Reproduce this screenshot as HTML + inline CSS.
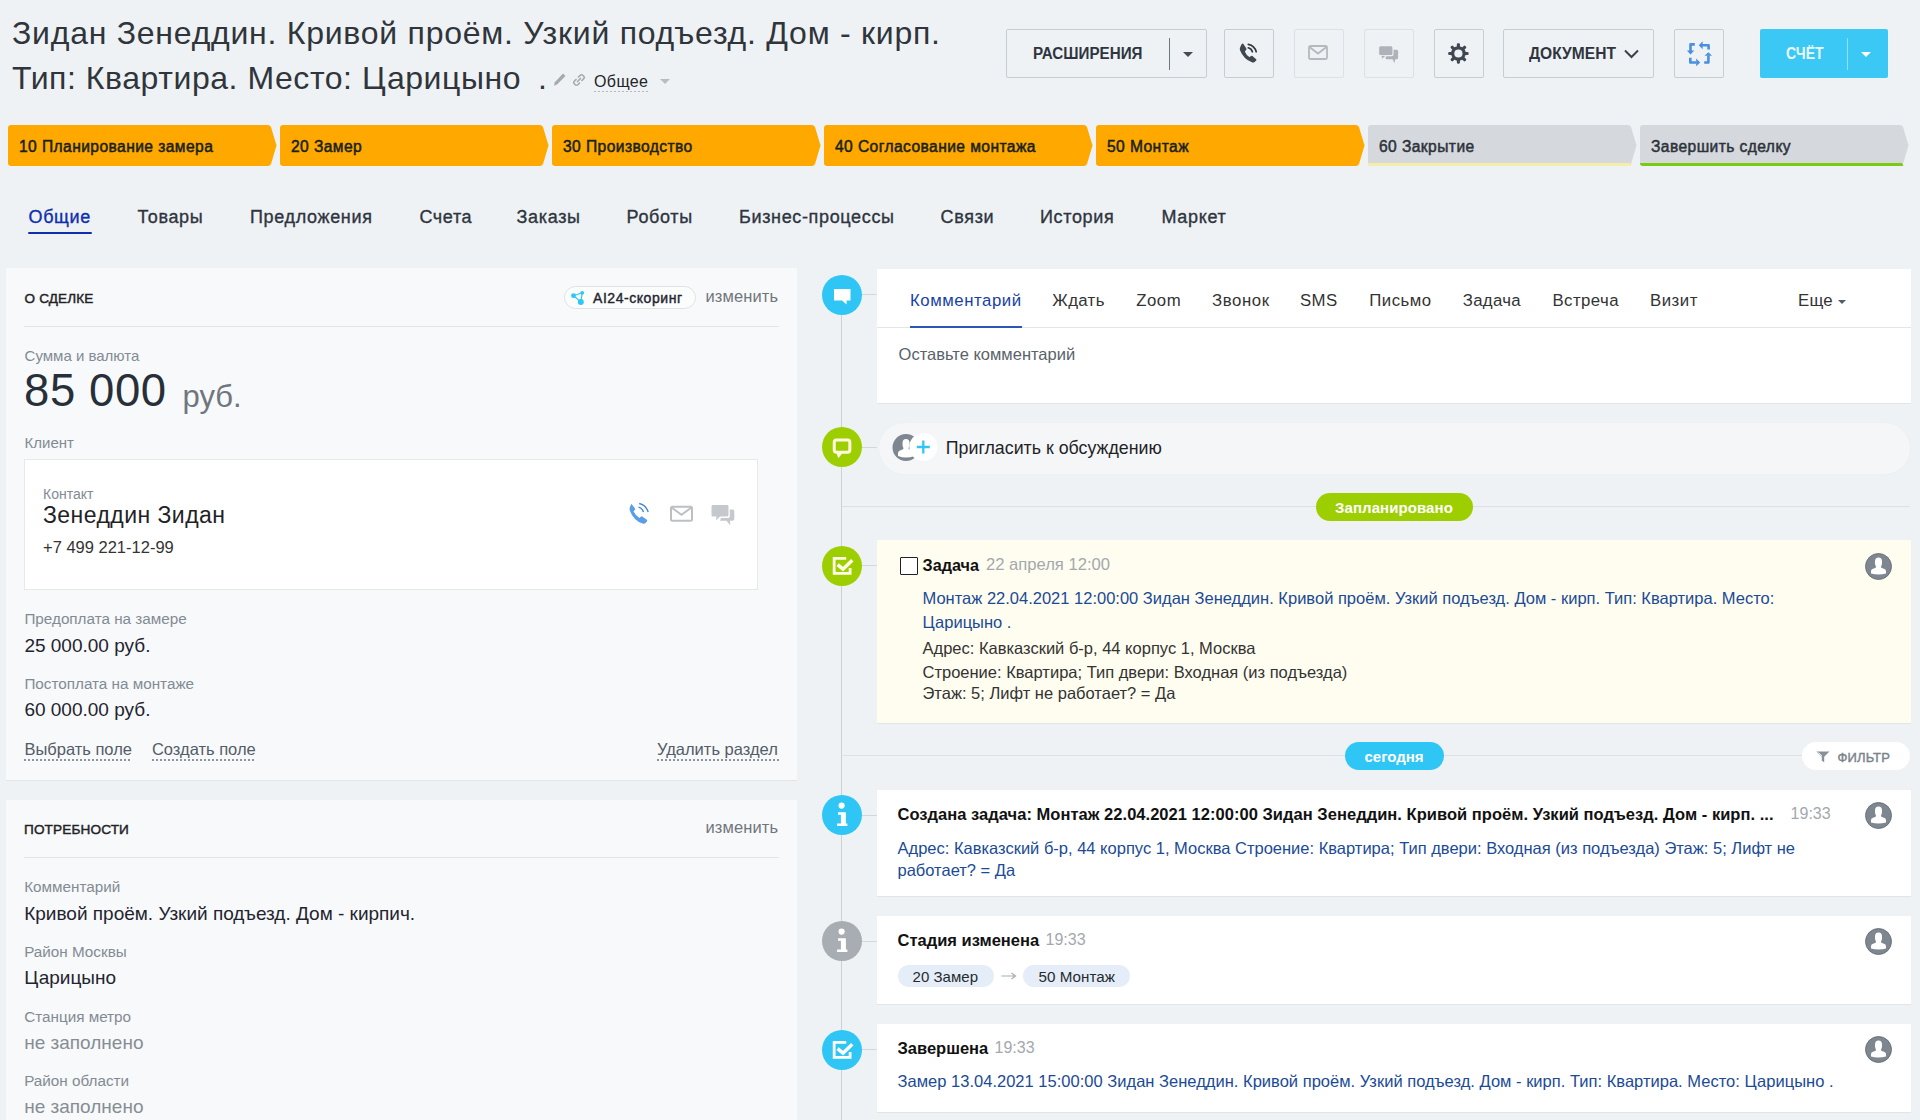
<!DOCTYPE html>
<html><head><meta charset="utf-8">
<style>
*{box-sizing:border-box;margin:0;padding:0}
html,body{width:1920px;height:1120px;overflow:hidden;background:#eef2f4;font-family:"Liberation Sans",sans-serif;color:#333}
.a{position:absolute}
.t{position:absolute;white-space:nowrap;line-height:1}
.btn{position:absolute;border:1px solid #c6cdd3;border-radius:2px;height:49px;top:29px}
.stg{position:absolute;top:125px;height:41px}
.stg svg{position:absolute;left:0;top:0}
.panel{position:absolute;background:#f8f9fa;box-shadow:0 1px 0 #e2e6e9}
.card{position:absolute;background:#fff;box-shadow:0 1px 0 #e1e5e8}
.ic{position:absolute;width:40px;height:40px;border-radius:50%;left:821px}
.lbl{color:#828b95}
.lnk{color:#2067b0}
.av{position:absolute;width:27px;height:27px;border-radius:50%;background:#878d94;overflow:hidden}
</style></head><body>

<!-- ===== HEADER ===== -->
<div class="t" style="left:12px;top:17px;font-size:32px;letter-spacing:.75px;color:#30353b">Зидан Зенеддин. Кривой проём. Узкий подъезд. Дом - кирп.</div>
<div class="t" style="left:12px;top:62px;font-size:32px;letter-spacing:.55px;color:#30353b">Тип: Квартира. Место: Царицыно</div>
<div class="t" style="left:538px;top:62px;font-size:32px;color:#30353b">.</div>


<!-- title icons -->
<svg class="a" style="left:553px;top:73px" width="13" height="14" viewBox="0 0 13 14"><path d="M10,0.5 L12.5,3 L4,11.5 L1,12.8 L1.8,9.2 Z" fill="#a5aab0"/></svg>
<svg class="a" style="left:572px;top:73px" width="14" height="14" viewBox="0 0 14 14"><g fill="none" stroke="#a5aab0" stroke-width="1.6"><path d="M6,4.5 L8,2.5 Q9.5,1 11,2.5 L11.5,3 Q13,4.5 11.5,6 L9.5,8"/><path d="M8,9.5 L6,11.5 Q4.5,13 3,11.5 L2.5,11 Q1,9.5 2.5,8 L4.5,6"/><path d="M5,9 L9,5"/></g></svg>
<div class="t" style="left:594px;top:74.3px;font-size:16px;letter-spacing:.4px;color:#1f2327">Общее</div>
<div class="a" style="left:594px;top:90.5px;width:56px;height:1.5px;background:repeating-linear-gradient(90deg,#b4b9be 0 2px,transparent 2px 4px)"></div>
<svg class="a" style="left:660px;top:79px" width="10" height="5" viewBox="0 0 10 5"><path d="M0,0 H10 L5,5Z" fill="#b9bdc2"/></svg>

<!-- buttons -->
<div class="btn" style="left:1006px;width:201px"></div>
<div class="t" style="left:1033px;top:45.8px;font-size:16.75px;font-weight:700;transform:scaleX(.906);transform-origin:0 0;color:#2f3540">РАСШИРЕНИЯ</div>
<div class="a" style="left:1168.5px;top:38px;width:1px;height:32px;background:#6f767e"></div>
<svg class="a" style="left:1183px;top:52px" width="10" height="5" viewBox="0 0 10 5"><path d="M0,0 H10 L5,5Z" fill="#454c55"/></svg>

<div class="btn" style="left:1224px;width:50px"></div>
<svg class="a" style="left:1238px;top:42px" width="20" height="22" viewBox="0 0 20 22"><path d="M5.2,1.8 L8.4,6.6 Q8.8,7.4 8.1,8.1 L6.8,9.4 Q7.9,12.6 11.6,15.3 L12.9,14.1 Q13.6,13.5 14.4,14 L18.2,17.2 Q18.8,17.8 18.2,18.5 L16.6,20 Q15.6,20.9 13.9,20.3 Q5.5,17 2,8.2 Q1.4,6.3 2.3,4.9 L3.7,2 Q4.3,1.2 5.2,1.8Z" fill="#3f4750"/><path d="M10.3,2.3 Q16.5,3.5 18.2,9.8" fill="none" stroke="#2f363e" stroke-width="1.7" stroke-linecap="round"/><path d="M10.3,5.8 Q13.5,6.6 14.4,9.8" fill="none" stroke="#2f363e" stroke-width="1.7" stroke-linecap="round"/></svg>

<div class="btn" style="left:1294px;width:50px;border-color:#dde1e5"></div>
<svg class="a" style="left:1308px;top:45px" width="20" height="15" viewBox="0 0 20 15"><rect x="1" y="1" width="18" height="13" rx="1.5" fill="none" stroke="#b5b9be" stroke-width="1.8"/><path d="M1.5,2 L10,8.5 L18.5,2" fill="none" stroke="#b5b9be" stroke-width="1.8"/></svg>

<div class="btn" style="left:1364px;width:50px;border-color:#dde1e5"></div>
<svg class="a" style="left:1377px;top:44px" width="24" height="22" viewBox="0 0 24 22"><rect x="8.5" y="5.8" width="12.6" height="9.4" rx="1.5" fill="#aeb3b9"/><path d="M15.3,14.8 L17.6,19.2 L18.2,14.8Z" fill="#aeb3b9"/><rect x="1.8" y="1.9" width="14.1" height="9.8" rx="1.6" fill="#aeb3b9" stroke="#eef2f4" stroke-width="1.3"/><path d="M4.0,11.3 L4.6,16 L9.6,11.3Z" fill="#aeb3b9" stroke="#eef2f4" stroke-width="1.1" stroke-linejoin="round"/><rect x="2.45" y="2.55" width="12.8" height="8.5" rx="1.2" fill="#aeb3b9"/></svg>

<div class="btn" style="left:1434px;width:50px"></div>
<svg class="a" style="left:1447px;top:42px" width="23" height="23" viewBox="0 0 23 23"><g fill="#3f4750" transform="translate(11.4 11.5)"><rect x="-1.55" y="-10.2" width="3.1" height="4.5" rx="1.1" transform="rotate(0)"/><rect x="-1.55" y="-10.2" width="3.1" height="4.5" rx="1.1" transform="rotate(45)"/><rect x="-1.55" y="-10.2" width="3.1" height="4.5" rx="1.1" transform="rotate(90)"/><rect x="-1.55" y="-10.2" width="3.1" height="4.5" rx="1.1" transform="rotate(135)"/><rect x="-1.55" y="-10.2" width="3.1" height="4.5" rx="1.1" transform="rotate(180)"/><rect x="-1.55" y="-10.2" width="3.1" height="4.5" rx="1.1" transform="rotate(225)"/><rect x="-1.55" y="-10.2" width="3.1" height="4.5" rx="1.1" transform="rotate(270)"/><rect x="-1.55" y="-10.2" width="3.1" height="4.5" rx="1.1" transform="rotate(315)"/><circle r="7.3"/></g><circle cx="11.4" cy="11.5" r="4.1" fill="#eef2f4"/></svg>

<div class="btn" style="left:1503px;width:151px"></div>
<div class="t" style="left:1528.75px;top:45.8px;font-size:16.75px;font-weight:700;transform:scaleX(.93);transform-origin:0 0;color:#2f3540">ДОКУМЕНТ</div>
<svg class="a" style="left:1624px;top:49px" width="15" height="10" viewBox="0 0 15 10"><path d="M1,1.5 L7.5,8 L14,1.5" fill="none" stroke="#3a4149" stroke-width="2"/></svg>

<div class="btn" style="left:1674px;width:50px"></div>
<svg class="a" style="left:1686px;top:40px" width="27" height="27" viewBox="0 0 27 27"><g fill="none" stroke="#4a8fe0" stroke-width="2.6" stroke-linejoin="round"><path d="M8.8,4.4 H4.5 V11"/><path d="M16,5.3 H22.6 V9.6"/><path d="M4.3,17.8 V22.5 H10.5"/><path d="M18.2,22.5 H22.4 V15.5"/></g><g fill="#4a8fe0"><path d="M0.9,10.5 H8.3 L4.5,14.6Z"/><path d="M12.8,5.3 L16.6,1.3 V9.3Z"/><path d="M10.2,18.6 V26.2 L14.2,22.5Z"/><path d="M18.6,15.8 H26 L22.4,12.2Z"/></g></svg>

<div class="a" style="left:1759.5px;top:29px;width:128px;height:49px;background:#3bc8f5;border-radius:2px"></div>
<div class="t" style="left:1785.5px;top:45.8px;font-size:16.75px;font-weight:700;transform:scaleX(.84);transform-origin:0 0;color:#eafaff">СЧЁТ</div>
<div class="a" style="left:1846.5px;top:38px;width:1px;height:32px;background:#8fe0f9"></div>
<svg class="a" style="left:1861px;top:52px" width="10" height="5" viewBox="0 0 10 5"><path d="M0,0 H10 L5,5Z" fill="#fff"/></svg>

<!-- stages -->
<div class="stg" style="left:7.5px;width:269px"><svg width="269" height="41" viewBox="0 0 269 41"><path d="M3,0 H260 Q262,0 263,2 L268.5,20.5 L263,39 Q262,41 260,41 H3 Q0,41 0,38 V3 Q0,0 3,0 Z" fill="#ffa900"/></svg><div class="t" style="left:11.5px;top:14.4px;font-size:15.6px;letter-spacing:.42px;-webkit-text-stroke:.5px currentColor;color:#18221a">10 Планирование замера</div></div>
<div class="stg" style="left:279.5px;width:269px"><svg width="269" height="41" viewBox="0 0 269 41"><path d="M3,0 H260 Q262,0 263,2 L268.5,20.5 L263,39 Q262,41 260,41 H3 Q0,41 0,38 V3 Q0,0 3,0 Z" fill="#ffa900"/></svg><div class="t" style="left:11.5px;top:14.4px;font-size:15.6px;letter-spacing:.42px;-webkit-text-stroke:.5px currentColor;color:#18221a">20 Замер</div></div>
<div class="stg" style="left:551.5px;width:269px"><svg width="269" height="41" viewBox="0 0 269 41"><path d="M3,0 H260 Q262,0 263,2 L268.5,20.5 L263,39 Q262,41 260,41 H3 Q0,41 0,38 V3 Q0,0 3,0 Z" fill="#ffa900"/></svg><div class="t" style="left:11.5px;top:14.4px;font-size:15.6px;letter-spacing:.42px;-webkit-text-stroke:.5px currentColor;color:#18221a">30 Производство</div></div>
<div class="stg" style="left:823.5px;width:269px"><svg width="269" height="41" viewBox="0 0 269 41"><path d="M3,0 H260 Q262,0 263,2 L268.5,20.5 L263,39 Q262,41 260,41 H3 Q0,41 0,38 V3 Q0,0 3,0 Z" fill="#ffa900"/></svg><div class="t" style="left:11.5px;top:14.4px;font-size:15.6px;letter-spacing:.42px;-webkit-text-stroke:.5px currentColor;color:#18221a">40 Согласование монтажа</div></div>
<div class="stg" style="left:1095.5px;width:269px"><svg width="269" height="41" viewBox="0 0 269 41"><path d="M3,0 H260 Q262,0 263,2 L268.5,20.5 L263,39 Q262,41 260,41 H3 Q0,41 0,38 V3 Q0,0 3,0 Z" fill="#ffa900"/></svg><div class="t" style="left:11.5px;top:14.4px;font-size:15.6px;letter-spacing:.42px;-webkit-text-stroke:.5px currentColor;color:#18221a">50 Монтаж</div></div>
<div class="stg" style="left:1367.5px;width:269px"><svg width="269" height="41" viewBox="0 0 269 41"><path d="M3,0 H260 Q262,0 263,2 L268.5,20.5 L263,39 Q262,41 260,41 H3 Q0,41 0,38 V3 Q0,0 3,0 Z" fill="#d5d9de"/><path d="M0,38 L262,38 L263.5,41 L3,41 Q0,41 0,38Z" fill="#f5eea6"/></svg><div class="t" style="left:11.5px;top:14.4px;font-size:15.6px;letter-spacing:.42px;-webkit-text-stroke:.5px currentColor;color:#2d333b">60 Закрытие</div></div>
<div class="stg" style="left:1639.5px;width:269px"><svg width="269" height="41" viewBox="0 0 269 41"><path d="M3,0 H260 Q262,0 263,2 L268.5,20.5 L263,39 Q262,41 260,41 H3 Q0,41 0,38 V3 Q0,0 3,0 Z" fill="#d5d9de"/><path d="M0,38 L262,38 L263.5,41 L3,41 Q0,41 0,38Z" fill="#7bcb12"/></svg><div class="t" style="left:11.5px;top:14.4px;font-size:15.6px;letter-spacing:.42px;-webkit-text-stroke:.5px currentColor;color:#2d333b">Завершить сделку</div></div>
<!-- tabs -->
<div class="t" style="left:28.5px;top:207.8px;font-size:18px;letter-spacing:.65px;-webkit-text-stroke:.35px currentColor;color:#0f2fad">Общие</div>
<div class="t" style="left:137.5px;top:207.8px;font-size:18px;letter-spacing:.65px;-webkit-text-stroke:.35px currentColor;color:#2f3540">Товары</div>
<div class="t" style="left:250px;top:207.8px;font-size:18px;letter-spacing:.65px;-webkit-text-stroke:.35px currentColor;color:#2f3540">Предложения</div>
<div class="t" style="left:419.4px;top:207.8px;font-size:18px;letter-spacing:.65px;-webkit-text-stroke:.35px currentColor;color:#2f3540">Счета</div>
<div class="t" style="left:516.6px;top:207.8px;font-size:18px;letter-spacing:.65px;-webkit-text-stroke:.35px currentColor;color:#2f3540">Заказы</div>
<div class="t" style="left:626.6px;top:207.8px;font-size:18px;letter-spacing:.65px;-webkit-text-stroke:.35px currentColor;color:#2f3540">Роботы</div>
<div class="t" style="left:739px;top:207.8px;font-size:18px;letter-spacing:.65px;-webkit-text-stroke:.35px currentColor;color:#2f3540">Бизнес-процессы</div>
<div class="t" style="left:940.6px;top:207.8px;font-size:18px;letter-spacing:.65px;-webkit-text-stroke:.35px currentColor;color:#2f3540">Связи</div>
<div class="t" style="left:1040px;top:207.8px;font-size:18px;letter-spacing:.65px;-webkit-text-stroke:.35px currentColor;color:#2f3540">История</div>
<div class="t" style="left:1161.5px;top:207.8px;font-size:18px;letter-spacing:.65px;-webkit-text-stroke:.35px currentColor;color:#2f3540">Маркет</div>
<div class="a" style="left:28px;top:232px;width:63.5px;height:2px;background:#0f2fad;border-radius:1px"></div>
<!-- ===== LEFT PANEL 1 ===== -->
<div class="panel" style="left:6px;top:268px;width:791px;height:512px"></div>
<div class="t" style="left:24.6px;top:291.9px;font-size:13.5px;letter-spacing:.14px;-webkit-text-stroke:.45px currentColor;color:#1f2327">О СДЕЛКЕ</div>
<div class="a" style="left:563.5px;top:285.5px;width:132px;height:23px;border:1px solid #dfe3e6;border-radius:12px;background:#fbfcfc"></div>
<svg class="a" style="left:570px;top:289px" width="16" height="16" viewBox="0 0 16 16"><g stroke="#2fc6f6" stroke-width="1.2"><path d="M3.5,6.7 L12.2,3.8"/><path d="M3.5,6.7 L10.8,12.9"/><path d="M12.2,3.8 L10.8,12.9"/></g><g fill="#2fc6f6"><circle cx="3.5" cy="6.7" r="2.4"/><circle cx="12.2" cy="3.8" r="1.9"/><circle cx="10.8" cy="12.9" r="3"/></g></svg>
<div class="t" style="left:593px;top:290.8px;font-size:14px;letter-spacing:.55px;-webkit-text-stroke:.4px currentColor;color:#1f2530">AI24-скоринг</div>
<div class="t" style="left:705.5px;top:287.5px;font-size:16.5px;letter-spacing:.1px;color:#70767d">изменить</div>
<div class="a" style="left:24px;top:326px;width:755px;height:1px;background:#e3e6e9"></div>

<div class="t lbl" style="left:24.6px;top:348.3px;font-size:15px">Сумма и валюта</div>
<div class="t" style="left:24px;top:367.7px;font-size:45.5px;letter-spacing:.6px;color:#273039">85 000</div>
<div class="t" style="left:182.5px;top:380.8px;font-size:31px;color:#6f767e">руб.</div>
<div class="t lbl" style="left:24.6px;top:434.8px;font-size:15px">Клиент</div>

<div class="a" style="left:24px;top:458.5px;width:734px;height:131px;background:#fff;border:1px solid #e6e9ec"></div>
<div class="t lbl" style="left:43px;top:487.2px;font-size:14px">Контакт</div>
<div class="t" style="left:43px;top:503.8px;font-size:23px;letter-spacing:.45px;color:#1f2327">Зенеддин Зидан</div>
<div class="t" style="left:43px;top:539.3px;font-size:16.5px;color:#333">+7 499 221-12-99</div>
<svg class="a" style="left:628px;top:502px" width="22" height="24" viewBox="0 0 22 24"><path d="M3.5,2 L7,6.5 Q7.5,7.3 6.8,8 L5.5,9.2 Q7.5,13.5 11.5,16 L12.8,14.7 Q13.5,14 14.3,14.5 L18.8,17.8 Q19.5,18.5 19,19.3 L17.8,20.8 Q16.5,22.2 14.5,21.6 Q5.5,18.5 1.8,8.5 Q1.2,6 2.3,4.2 L3,2.4 Q3.2,1.8 3.5,2Z" fill="#5b9de6"/><path d="M11.2,1.5 Q18,3 20.2,10" fill="none" stroke="#3e82d6" stroke-width="1.3"/><path d="M10.5,5.2 Q14.5,6.2 15.5,10.2" fill="none" stroke="#3e82d6" stroke-width="1.3"/></svg>
<svg class="a" style="left:669px;top:505px" width="25" height="18" viewBox="0 0 25 18"><rect x="2" y="1.8" width="21" height="14" rx="1.5" fill="none" stroke="#bcc0c5" stroke-width="2"/><path d="M2.5,2.5 L12.5,9.8 L22.5,2.5" fill="none" stroke="#bcc0c5" stroke-width="2"/></svg>
<svg class="a" style="left:710px;top:504px" width="26" height="23" viewBox="0 0 26 23"><path d="M3,1 H17 Q18.5,1 18.5,2.5 V11 Q18.5,12.5 17,12.5 H10 L6,16.5 L6.5,12.5 H3 Q1.5,12.5 1.5,11 V2.5 Q1.5,1 3,1Z" fill="#c5c9cd"/><path d="M19.8,5.5 H22.5 Q24.3,5.5 24.3,7.3 V15 Q24.3,16.8 22.5,16.8 H20 L20.3,21.5 L16.5,16.8 H10 L11,14 H18 Q19.8,14 19.8,12.3Z" fill="#c5c9cd"/></svg>

<div class="t lbl" style="left:24.4px;top:611.1px;font-size:15.25px">Предоплата на замере</div>
<div class="t" style="left:24.4px;top:635.5px;font-size:19px;color:#1f2530">25 000.00 руб.</div>
<div class="t lbl" style="left:24.4px;top:675.9px;font-size:15.25px">Постоплата на монтаже</div>
<div class="t" style="left:24.4px;top:700px;font-size:19px;color:#1f2530">60 000.00 руб.</div>
<div class="t" style="left:24.4px;top:740.8px;font-size:16.5px;color:#535c69">Выбрать поле</div>
<div class="a" style="left:24px;top:759px;width:108px;height:1.5px;background:repeating-linear-gradient(90deg,#8d949b 0 2px,transparent 2px 4px)"></div>
<div class="t" style="left:151.9px;top:740.8px;font-size:16.5px;color:#535c69">Создать поле</div>
<div class="a" style="left:152px;top:759px;width:104px;height:1.5px;background:repeating-linear-gradient(90deg,#8d949b 0 2px,transparent 2px 4px)"></div>
<div class="t" style="left:657px;top:740.8px;font-size:16.5px;color:#535c69">Удалить раздел</div>
<div class="a" style="left:657px;top:759px;width:122px;height:1.5px;background:repeating-linear-gradient(90deg,#8d949b 0 2px,transparent 2px 4px)"></div>

<!-- ===== LEFT PANEL 2 ===== -->
<div class="panel" style="left:6px;top:800px;width:791px;height:330px"></div>
<div class="t" style="left:24px;top:822.6px;font-size:13.6px;letter-spacing:.13px;-webkit-text-stroke:.45px currentColor;color:#1f2327">ПОТРЕБНОСТИ</div>
<div class="t" style="left:705.5px;top:819px;font-size:16.5px;letter-spacing:.1px;color:#70767d">изменить</div>
<div class="a" style="left:24px;top:856.5px;width:755px;height:1px;background:#e3e6e9"></div>
<div class="t lbl" style="left:24.2px;top:879px;font-size:15.25px">Комментарий</div>
<div class="t" style="left:24.2px;top:903.5px;font-size:19px;color:#1f2530">Кривой проём. Узкий подъезд. Дом - кирпич.</div>
<div class="t lbl" style="left:24.2px;top:944.1px;font-size:15.25px">Район Москвы</div>
<div class="t" style="left:24.2px;top:967.9px;font-size:19px;color:#1f2530">Царицыно</div>
<div class="t lbl" style="left:24.2px;top:1008.8px;font-size:15.25px">Станция метро</div>
<div class="t" style="left:24.2px;top:1032.7px;font-size:19px;color:#868d95">не заполнено</div>
<div class="t lbl" style="left:24.2px;top:1073.1px;font-size:15.25px">Район области</div>
<div class="t" style="left:24.2px;top:1096.9px;font-size:19px;color:#868d95">не заполнено</div>

<!-- ===== TIMELINE ===== -->
<div class="a" style="left:841px;top:294px;width:1px;height:830px;background:#cdd1d5"></div>
<svg class="a" style="left:821.75px;top:274.50px" width="40" height="40" viewBox="0 0 40 40"><circle cx="20" cy="20" r="20" fill="#2fc6f6"/><path d="M12,14 H28.5 V25.6 H24.6 V29.4 L20,25.6 H12 Z" fill="#fff"/></svg>
<div class="a" style="left:862px;top:294.00px;width:15px;height:1px;background:#d3d7db"></div>
<div class="card" style="left:877px;top:268.5px;width:1034px;height:134px"></div>
<div class="t" style="left:910px;top:292.78px;font-size:16.8px;color:#173fa9;letter-spacing:0.54px">Комментарий</div>
<div class="t" style="left:1052.3px;top:292.78px;font-size:16.8px;color:#333;letter-spacing:0.35px">Ждать</div>
<div class="t" style="left:1136.3px;top:292.78px;font-size:16.8px;color:#333;letter-spacing:0.49px">Zoom</div>
<div class="t" style="left:1212px;top:292.78px;font-size:16.8px;color:#333;letter-spacing:0.57px">Звонок</div>
<div class="t" style="left:1300px;top:292.78px;font-size:16.8px;color:#333;letter-spacing:0.37px">SMS</div>
<div class="t" style="left:1369.3px;top:292.78px;font-size:16.8px;color:#333;letter-spacing:0.45px">Письмо</div>
<div class="t" style="left:1462.7px;top:292.78px;font-size:16.8px;color:#333;letter-spacing:0.32px">Задача</div>
<div class="t" style="left:1552.5px;top:292.78px;font-size:16.8px;color:#333;letter-spacing:0.43px">Встреча</div>
<div class="t" style="left:1650px;top:292.78px;font-size:16.8px;color:#333;letter-spacing:0.52px">Визит</div>
<div class="t" style="left:1798px;top:292.78px;font-size:16.8px;color:#333;letter-spacing:0.27px">Еще</div>
<svg class="a" style="left:1838px;top:300px" width="8" height="4" viewBox="0 0 8 4"><path d="M0,0 H8 L4,4Z" fill="#535c69"/></svg>
<div class="a" style="left:877px;top:327px;width:1034px;height:1px;background:#e3e6e9"></div>
<div class="a" style="left:910px;top:326.3px;width:112px;height:2px;background:#2a56b5"></div>
<div class="t" style="left:898.6px;top:346.13px;font-size:16.5px;color:#5a626b">Оставьте комментарий</div>
<svg class="a" style="left:821.75px;top:427.20px" width="40" height="40" viewBox="0 0 40 40"><circle cx="20" cy="20" r="20" fill="#9dcf00"/><rect x="12.25" y="12.9" width="15.6" height="12.3" rx="2.2" fill="none" stroke="#fffde0" stroke-width="3"/><path d="M14.3,25.5 L16.3,31.3 L21,25.5 Z" fill="#fffde0"/></svg>
<div class="a" style="left:862px;top:446.70px;width:15px;height:1px;background:#d3d7db"></div>
<div class="a" style="left:877.5px;top:421.5px;width:1033px;height:53px;border-radius:27px;background:#f4f6f8;border:1px solid #edf0f2"></div>
<svg class="a" style="left:892px;top:433px" width="46" height="29" viewBox="0 0 46 29"><circle cx="14" cy="14.5" r="13.5" fill="#7e868f"/><path d="M14,6 Q17.5,6 17.5,10 V12 Q17.3,14 16.5,15 Q16.3,16 17.5,16.4 L21,17.8 Q22.5,18.5 22.5,20 V23 Q18,24.5 14,24.5 Q10,24.5 6,23 V20 Q6,18.5 7.5,17.8 L10.5,16.4 Q11.7,16 11.5,15 Q10.7,14 10.5,12 V10 Q10.5,6 14,6Z" fill="#fff"/><circle cx="31.3" cy="14" r="14" fill="#fff"/><path d="M31.3,7.5 V20.5 M24.8,14 H37.8" stroke="#2fc6f6" stroke-width="2.3"/></svg>
<div class="t" style="left:945.8px;top:439.63px;font-size:17.8px;color:#1f2327">Пригласить к обсуждению</div>
<div class="a" style="left:842px;top:505.5px;width:1068px;height:1px;background:#dde1e4"></div>
<div class="a" style="left:1315.8px;top:493px;width:157px;height:28px;border-radius:14px;background:#9dcf00"></div>
<div class="t" style="left:1335px;top:500.00px;font-size:15px;color:#fff;font-weight:700;letter-spacing:0.08px">Запланировано</div>
<svg class="a" style="left:821.75px;top:545.90px" width="40" height="40" viewBox="0 0 40 40"><circle cx="20" cy="20" r="20" fill="#9dcf00"/><path d="M24.2,12.4 H12.15 V27.4 H28.1 V22.1" fill="none" stroke="#fffde8" stroke-width="2.8"/><path d="M15.6,18.6 L21,23.2 L30.3,14.3" fill="none" stroke="#fffde8" stroke-width="3.5"/></svg>
<div class="a" style="left:862px;top:565.40px;width:15px;height:1px;background:#d3d7db"></div>
<div class="card" style="left:877px;top:540.2px;width:1034px;height:183px;background:#fffdef"></div>
<div class="a" style="left:900.3px;top:557.2px;width:18px;height:18px;border:1.8px solid #1e2226;border-radius:1px;background:#fff"></div>
<div class="t" style="left:922.5px;top:557.09px;font-size:16.2px;color:#111;font-weight:700">Задача</div>
<div class="t" style="left:986px;top:556.75px;font-size:16.6px;color:#a3a8ae">22 апреля 12:00</div>
<div class="t" style="left:922.5px;top:589.53px;font-size:16.5px;color:#1b4a96">Монтаж 22.04.2021 12:00:00 Зидан Зенеддин. Кривой проём. Узкий подъезд. Дом - кирп. Тип: Квартира. Место:</div>
<div class="t" style="left:922.5px;top:613.73px;font-size:16.5px;color:#1b4a96">Царицыно .</div>
<div class="t" style="left:922.5px;top:640.03px;font-size:16.5px;color:#333">Адрес: Кавказский б-р, 44 корпус 1, Москва</div>
<div class="t" style="left:922.5px;top:663.73px;font-size:16.5px;color:#333">Строение: Квартира; Тип двери: Входная (из подъезда)</div>
<div class="t" style="left:922.5px;top:685.33px;font-size:16.5px;color:#333">Этаж: 5; Лифт не работает? = Да</div>
<svg class="a" style="left:1865.30px;top:553.00px" width="27" height="27" viewBox="0 0 27 27"><circle cx="13.5" cy="13.5" r="13" fill="#7e868f" stroke="#5d656e" stroke-width="0.8"/><path d="M13.5,4.5 Q17,4.5 17,8.5 V10.5 Q16.8,12.5 16,13.5 Q15.8,14.6 17,15 L19.5,16 Q21,16.6 21,18.2 V20.5 Q17.5,21.6 13.5,21.6 Q9.5,21.6 6,20.5 V18.2 Q6,16.6 7.5,16 L10,15 Q11.2,14.6 11,13.5 Q10.2,12.5 10,10.5 V8.5 Q10,4.5 13.5,4.5Z" fill="#fff"/></svg>
<div class="a" style="left:842px;top:755px;width:1068px;height:1px;background:#dde1e4"></div>
<div class="a" style="left:1344.5px;top:742px;width:99px;height:28px;border-radius:14px;background:#2fc6f6"></div>
<div class="t" style="left:1364.5px;top:749.00px;font-size:15px;color:#fff;font-weight:700">сегодня</div>
<div class="a" style="left:1802.4px;top:742.3px;width:108px;height:27.5px;border-radius:14px;background:#fff"></div>
<svg class="a" style="left:1816px;top:750.5px" width="14" height="12" viewBox="0 0 14 12"><path d="M0.5,0.5 H13.5 L8.2,5.8 V11.3 L5.8,9.8 V5.8Z" fill="#8a9098"/><path d="M2.5,1.5 L6,5" stroke="#fff" stroke-width="0.8"/></svg>
<div class="t" style="left:1837.4px;top:750.80px;font-size:13px;color:#7b828a;letter-spacing:0.17px;-webkit-text-stroke:.4px currentColor">ФИЛЬТР</div>
<svg class="a" style="left:821.75px;top:795.20px" width="40" height="40" viewBox="0 0 40 40"><circle cx="20" cy="20" r="20" fill="#2fc6f6"/><circle cx="19.6" cy="10.6" r="3.1" fill="#fff"/><path d="M16.05,17.2 H23.9 V28.45 H25.4 V30.95 H15.1 V28.45 H18.9 V19.7 H16.05 Z" fill="#fff"/></svg>
<div class="a" style="left:862px;top:814.70px;width:15px;height:1px;background:#d3d7db"></div>
<div class="card" style="left:877px;top:790.3px;width:1034px;height:105.7px"></div>
<div class="t" style="left:897.5px;top:806.03px;font-size:16.5px;color:#111;font-weight:700;letter-spacing:0.03px">Создана задача: Монтаж 22.04.2021 12:00:00 Зидан Зенеддин. Кривой проём. Узкий подъезд. Дом - кирп. ...</div>
<div class="t" style="left:1790.6px;top:806.46px;font-size:16px;color:#a3a8ae">19:33</div>
<div class="t" style="left:897.5px;top:839.78px;font-size:16.5px;color:#1b4a96">Адрес: Кавказский б-р, 44 корпус 1, Москва Строение: Квартира; Тип двери: Входная (из подъезда) Этаж: 5; Лифт не</div>
<div class="t" style="left:897.5px;top:862.03px;font-size:16.5px;color:#1b4a96">работает? = Да</div>
<svg class="a" style="left:1865.30px;top:801.80px" width="27" height="27" viewBox="0 0 27 27"><circle cx="13.5" cy="13.5" r="13" fill="#7e868f" stroke="#5d656e" stroke-width="0.8"/><path d="M13.5,4.5 Q17,4.5 17,8.5 V10.5 Q16.8,12.5 16,13.5 Q15.8,14.6 17,15 L19.5,16 Q21,16.6 21,18.2 V20.5 Q17.5,21.6 13.5,21.6 Q9.5,21.6 6,20.5 V18.2 Q6,16.6 7.5,16 L10,15 Q11.2,14.6 11,13.5 Q10.2,12.5 10,10.5 V8.5 Q10,4.5 13.5,4.5Z" fill="#fff"/></svg>
<svg class="a" style="left:821.75px;top:921.25px" width="40" height="40" viewBox="0 0 40 40"><circle cx="20" cy="20" r="20" fill="#a8adb4"/><circle cx="19.6" cy="10.6" r="3.1" fill="#fff"/><path d="M16.05,17.2 H23.9 V28.45 H25.4 V30.95 H15.1 V28.45 H18.9 V19.7 H16.05 Z" fill="#fff"/></svg>
<div class="a" style="left:862px;top:940.75px;width:15px;height:1px;background:#d3d7db"></div>
<div class="card" style="left:877px;top:916px;width:1034px;height:87.75px"></div>
<div class="t" style="left:897.5px;top:931.63px;font-size:16.5px;color:#111;font-weight:700">Стадия изменена</div>
<div class="t" style="left:1045.5px;top:932.06px;font-size:16px;color:#a3a8ae">19:33</div>
<div class="a" style="left:897.5px;top:965.3px;width:96.25px;height:22px;border-radius:11px;background:#e5eef8"></div>
<div class="t" style="left:912.5px;top:969.00px;font-size:15px;color:#262a2f;letter-spacing:0.05px">20 Замер</div>
<svg class="a" style="left:1000px;top:971px" width="18" height="10" viewBox="0 0 18 10"><path d="M1.5,5 H15 M11.5,2 L15.5,5 L11.5,8" fill="none" stroke="#a8adb4" stroke-width="1.2"/></svg>
<div class="a" style="left:1022.8px;top:965.3px;width:107px;height:22px;border-radius:11px;background:#e5eef8"></div>
<div class="t" style="left:1038.4px;top:969.13px;font-size:15.2px;color:#262a2f;letter-spacing:0.05px">50 Монтаж</div>
<svg class="a" style="left:1865.30px;top:927.50px" width="27" height="27" viewBox="0 0 27 27"><circle cx="13.5" cy="13.5" r="13" fill="#7e868f" stroke="#5d656e" stroke-width="0.8"/><path d="M13.5,4.5 Q17,4.5 17,8.5 V10.5 Q16.8,12.5 16,13.5 Q15.8,14.6 17,15 L19.5,16 Q21,16.6 21,18.2 V20.5 Q17.5,21.6 13.5,21.6 Q9.5,21.6 6,20.5 V18.2 Q6,16.6 7.5,16 L10,15 Q11.2,14.6 11,13.5 Q10.2,12.5 10,10.5 V8.5 Q10,4.5 13.5,4.5Z" fill="#fff"/></svg>
<svg class="a" style="left:821.75px;top:1029.70px" width="40" height="40" viewBox="0 0 40 40"><circle cx="20" cy="20" r="20" fill="#2fc6f6"/><path d="M24.2,12.4 H12.15 V27.4 H28.1 V22.1" fill="none" stroke="#fff" stroke-width="2.8"/><path d="M15.6,18.6 L21,23.2 L30.3,14.3" fill="none" stroke="#fff" stroke-width="3.5"/></svg>
<div class="a" style="left:862px;top:1049.20px;width:15px;height:1px;background:#d3d7db"></div>
<div class="card" style="left:877px;top:1024px;width:1034px;height:87.6px"></div>
<div class="t" style="left:897.5px;top:1039.78px;font-size:16.5px;color:#111;font-weight:700">Завершена</div>
<div class="t" style="left:994.5px;top:1040.21px;font-size:16px;color:#a3a8ae">19:33</div>
<div class="t" style="left:897.5px;top:1073.03px;font-size:16.5px;color:#1b4a96;letter-spacing:0.015px">Замер 13.04.2021 15:00:00 Зидан Зенеддин. Кривой проём. Узкий подъезд. Дом - кирп. Тип: Квартира. Место: Царицыно .</div>
<svg class="a" style="left:1865.30px;top:1035.50px" width="27" height="27" viewBox="0 0 27 27"><circle cx="13.5" cy="13.5" r="13" fill="#7e868f" stroke="#5d656e" stroke-width="0.8"/><path d="M13.5,4.5 Q17,4.5 17,8.5 V10.5 Q16.8,12.5 16,13.5 Q15.8,14.6 17,15 L19.5,16 Q21,16.6 21,18.2 V20.5 Q17.5,21.6 13.5,21.6 Q9.5,21.6 6,20.5 V18.2 Q6,16.6 7.5,16 L10,15 Q11.2,14.6 11,13.5 Q10.2,12.5 10,10.5 V8.5 Q10,4.5 13.5,4.5Z" fill="#fff"/></svg>
</body></html>
